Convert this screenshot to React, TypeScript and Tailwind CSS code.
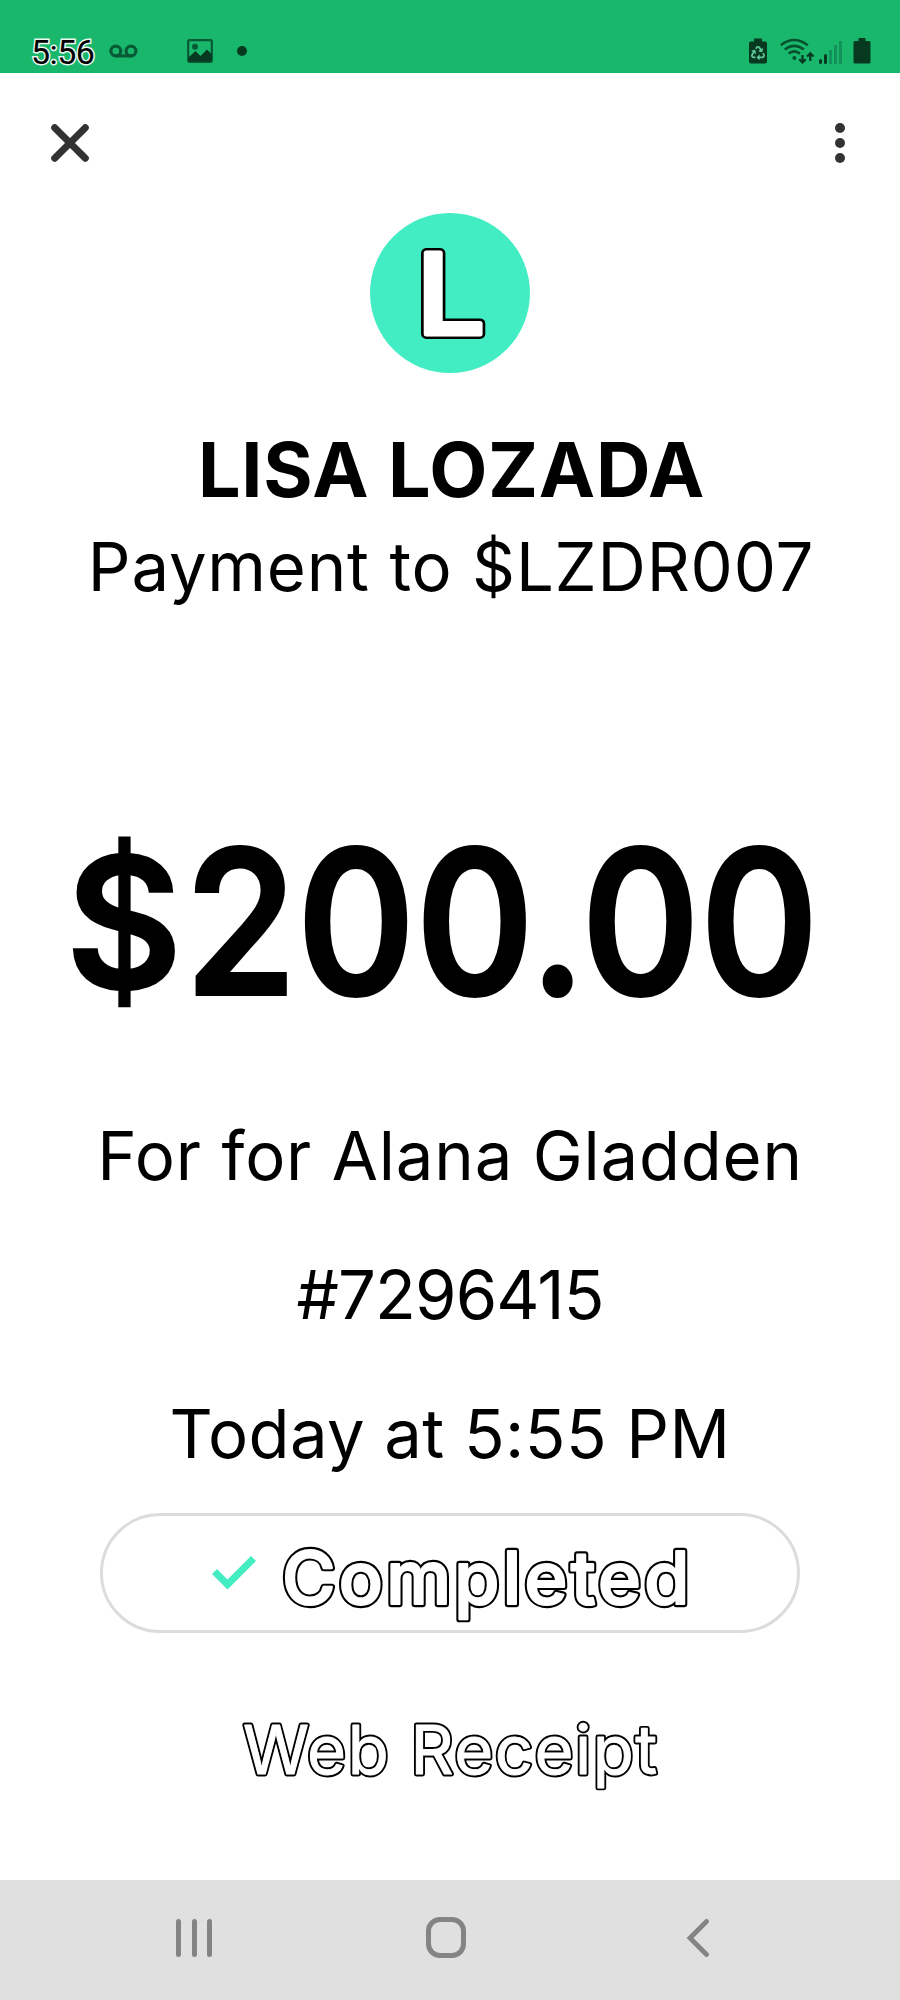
import { useId } from 'react';
import { FaRecycle } from 'react-icons/fa';

interface OutlinedTextProps {
    text: string;
    x: number;
    y: number;
    outer: number;
    inner: number;
    className: string;
}

// White lettering with a rounded black outline: the same text is stroked
// twice, wide in black and then narrower in white.
function OutlinedText({ text, x, y, outer, inner, className }: OutlinedTextProps) {
    const id = useId();
    return (
        <svg className={`overflow-visible ${className}`} strokeLinejoin="round">
            <defs>
                <text id={id} x={x} y={y}>
                    {text}
                </text>
            </defs>
            <use href={`#${id}`} stroke="#000" strokeWidth={outer} />
            <use
                href={`#${id}`}
                fill="#fff"
                stroke="#fff"
                strokeWidth={inner}
            />
        </svg>
    );
}

function StatusBar() {
    return (
        <header className="flex h-[73px] shrink-0 items-end justify-between bg-[#18b76c] pr-[29px] pl-[31px] text-[#06391f]">
            <div className="flex items-end">
                <span className="mb-[2px] h-[38px] w-[63px] font-[Roboto,sans-serif] text-[34px] leading-[38px] tracking-[-0.6px] whitespace-nowrap text-black [-webkit-text-stroke:3px_#e8f8ef] [paint-order:stroke_fill]">
                    5:56
                </span>
                {/* voicemail */}
                <svg
                    className="mb-[15px] ml-[15px] h-[14px] w-[29px]"
                    viewBox="0 0 29 14"
                    fill="none"
                    stroke="#075a34"
                    strokeWidth="3.2"
                >
                    <circle cx="6.8" cy="7" r="4.9" />
                    <circle cx="22" cy="7" r="4.9" />
                    <path d="M6.8 11.9h15.2" />
                </svg>
                {/* gallery */}
                <svg
                    className="mb-[10px] ml-[49px] h-[24px] w-[26px]"
                    viewBox="0 0 26 24"
                >
                    <rect
                        x="1.2"
                        y="1.2"
                        width="23.6"
                        height="21.6"
                        rx="1.5"
                        fill="none"
                        stroke="#075a34"
                        strokeWidth="2.2"
                    />
                    <circle cx="8" cy="7.8" r="3" fill="#075a34" />
                    <path
                        d="M1.5 18.5 8.5 12l5 5 6.5-6.5 4.7 4.5v7.5H1.5z"
                        fill="currentColor"
                    />
                </svg>
                <span className="mb-[17px] ml-[24px] size-[10px] rounded-full bg-[#06391f]" />
            </div>

            <div className="mb-[9px] flex items-end">
                {/* power saving battery */}
                <div className="relative">
                    <svg className="h-[26px] w-[18px]" viewBox="0 0 18 26">
                        <path
                            d="M5 0.500h8V3.500h3q2 0 2 2v18q0 2-2 2H2q-2 0-2-2V5.500q0-2 2-2h3z"
                            fill="currentColor"
                        />
                    </svg>
                    <FaRecycle className="absolute top-[8px] left-[2px] size-[14px] text-[#5fc795]" />
                </div>
                {/* wifi with traffic arrows */}
                <svg
                    className="ml-[12px] h-[27px] w-[36px]"
                    viewBox="0 0 36 27"
                    fill="none"
                    stroke="currentColor"
                >
                    <g stroke="#07502e" strokeWidth="2.600">
                        <path d="M1.800 8.200q13-10.400 27 0" />
                        <path d="M5.800 12.500q9.200-7.400 19 0" />
                        <path d="M9.600 16.600q5.600-4.400 11.400 0" />
                    </g>
                    <circle cx="15.400" cy="21" r="2" fill="#07502e" stroke="none" />
                    <path
                        d="M23.500 18v7M20.300 22.300l3.200 3.200 3.200-3.200M31.300 24v-7.500M28.100 19.500l3.200-3.200 3.200 3.200"
                        strokeWidth="2.200"
                    />
                </svg>
                {/* signal strength */}
                <div className="ml-[4px] flex items-end gap-[2px]">
                    <span className="h-[5px] w-[3px] rounded-full bg-[#06391f]" />
                    <span className="h-[10px] w-[3px] rounded-full bg-[#06391f]" />
                    <span className="h-[14px] w-[3px] bg-[#12925a]" />
                    <span className="h-[19px] w-[3px] bg-[#12925a]" />
                    <span className="h-[23px] w-[3px] bg-[#12925a]" />
                </div>
                <svg className="ml-[11px] h-[26px] w-[18px]" viewBox="0 0 18 26">
                    <path
                        d="M5.500 0h7v3H16q1.500 0 1.500 1.500V24q0 1.500-1.500 1.500H2Q.5 25.500.5 24V4.500Q.5 3 2 3h3.500z"
                        fill="currentColor"
                    />
                </svg>
            </div>
        </header>
    );
}

function Toolbar() {
    return (
        <div className="flex h-[140px] items-center justify-between pr-[55px] pl-[51px] text-[#333]">
            <button type="button" aria-label="Close">
                <svg
                    className="size-[38px]"
                    viewBox="0 0 38 38"
                    stroke="currentColor"
                    strokeWidth="7"
                    strokeLinecap="round"
                >
                    <path d="M3.700 3.700l30.600 30.600M34.300 3.700 3.700 34.300" />
                </svg>
            </button>
            <button
                type="button"
                aria-label="More"
                className="flex flex-col gap-[5px]"
            >
                <span className="size-[10px] rounded-full bg-[#333]" />
                <span className="size-[10px] rounded-full bg-[#333]" />
                <span className="size-[10px] rounded-full bg-[#333]" />
            </button>
        </div>
    );
}

function NavigationBar() {
    return (
        <nav className="flex h-[120px] shrink-0 items-center justify-between bg-[#e0e0e0] pr-[190px] pb-[5px] pl-[176px] text-[#848484]">
            <div className="flex w-[36px] items-center justify-between">
                <span className="h-[38px] w-[5px] rounded-full bg-[#848484]" />
                <span className="h-[38px] w-[5px] rounded-full bg-[#848484]" />
                <span className="h-[38px] w-[5px] rounded-full bg-[#848484]" />
            </div>
            <span className="mr-[6px] h-[41px] w-[40px] rounded-[14px] border-[5px] border-[#848484]" />
            <svg
                className="h-[38px] w-[24px]"
                viewBox="0 0 24 38"
                fill="none"
                stroke="currentColor"
                strokeWidth="4.800"
                strokeLinecap="round"
            >
                <path d="M20.500 2.500 4 19l16.500 16.500" />
            </svg>
        </nav>
    );
}

export default function App() {
    return (
        <div className="flex h-[2000px] w-[900px] flex-col overflow-hidden bg-white font-[Inter,sans-serif] text-black">
            <StatusBar />
            <main className="flex flex-1 flex-col">
                <Toolbar />

                <div className="flex flex-col items-center whitespace-nowrap">
                    <div className="size-[160px] rounded-full bg-[#43edc3]">
                        <OutlinedText
                            text="L"
                            x={49.5}
                            y={121}
                            outer={10}
                            inner={5}
                            className="size-[160px] scale-x-[1.09] text-[111px] font-medium"
                        />
                    </div>

                    <h1 className="mt-[49px] ml-[3px] text-[75.5px] leading-[96px] font-bold tracking-[0.7px]">
                        LISA LOZADA
                    </h1>
                    <p className="ml-[2px] text-[67px] leading-[97px] tracking-[0.8px]">
                        Payment to $LZDR007
                    </p>

                    <p className="mt-[207px] mr-[15px] scale-x-[0.89] text-[202px] leading-[200px] font-semibold [-webkit-text-stroke:2px_#000]">
                        <span className="inline-block w-[134px] scale-y-[0.9]">$</span>
                        200.00
                    </p>

                    <div className="mt-[64px] text-center text-[67px] leading-[139px]">
                        <p className="tracking-[0.8px]">For for Alana Gladden</p>
                        <p className="tracking-[-0.9px]">#7296415</p>
                        <p className="tracking-[0.4px]">Today at 5:55 PM</p>
                    </div>

                    <div className="mt-[10px] flex h-[120px] w-[700px] items-center rounded-full border-3 border-[#dcdcdc] pl-[109px]">
                        <svg
                            className="h-[34px] w-[44px]"
                            viewBox="0 0 44 34"
                            fill="none"
                            stroke="#43edc3"
                            strokeWidth="7"
                        >
                            <path d="M2.500 15.500 15.500 28.500 41.500 2.500" />
                        </svg>
                        <OutlinedText
                            text="Completed"
                            x={2}
                            y={80.5}
                            outer={6.4}
                            inner={2.2}
                            className="ml-[24px] h-[100px] w-[410px] text-[73px] font-medium tracking-[3.3px]"
                        />
                    </div>

                    <button type="button" className="mt-[67px]">
                        <OutlinedText
                            text="Web Receipt"
                            x={2}
                            y={74}
                            outer={4.8}
                            inner={1}
                            className="h-[100px] w-[418px] text-[67px] tracking-[1.5px]"
                        />
                    </button>
                </div>
            </main>
            <NavigationBar />
        </div>
    );
}
